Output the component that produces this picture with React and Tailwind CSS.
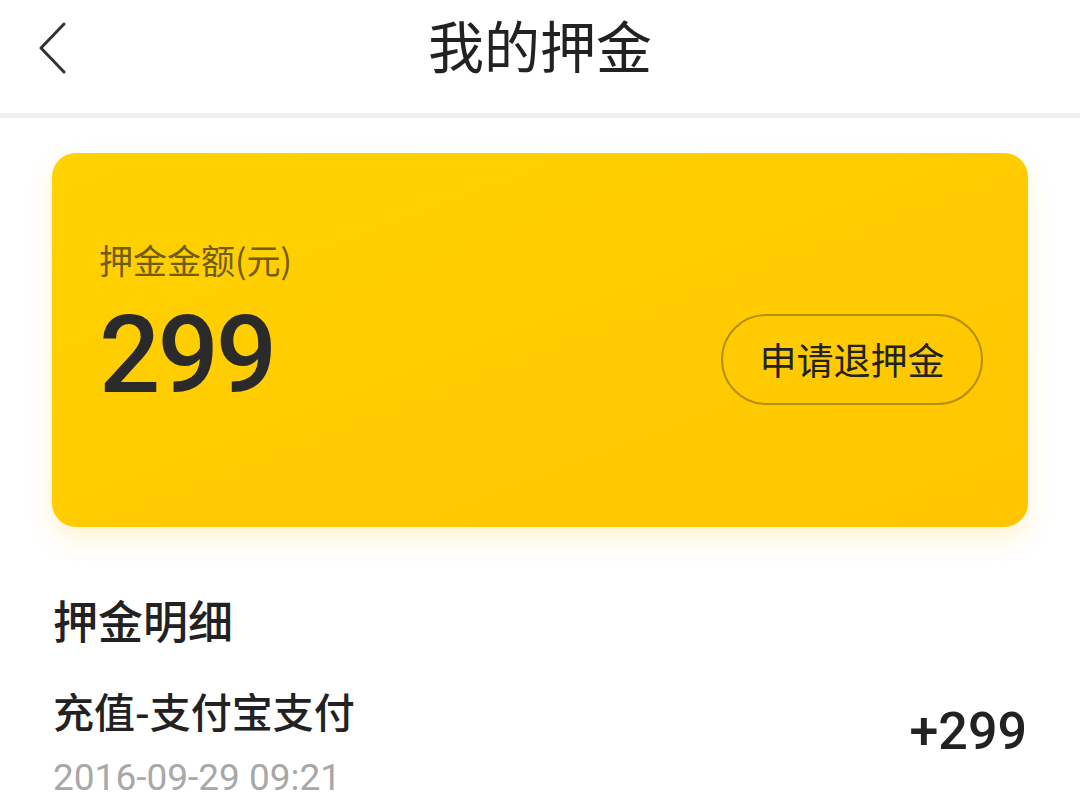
import React from 'react';

const cjk = { fontFamily: '"Noto Sans CJK SC", "Noto Sans", sans-serif' };
const num = { fontFamily: 'Roboto, "Noto Sans CJK SC", sans-serif' };

export default function App() {
  return (
    <div className="w-[1080px] h-[801px] overflow-hidden bg-white text-[#222]" style={cjk}>
      {/* Header */}
      <header className="relative h-[118px] flex items-center justify-center border-b-[5px] border-[#efefef]">
        <button className="absolute left-[32px] top-[20px] w-[40px] h-[56px] flex items-center justify-center">
          <svg width="32" height="52" viewBox="0 0 32 52" fill="none">
            <path d="M28 2 L5 26 L28 50" stroke="#333" strokeWidth="3" strokeLinecap="round" strokeLinejoin="round" />
          </svg>
        </button>
        <h1 className="-mt-[26px] text-[56px] leading-none font-normal text-[#222]">我的押金</h1>
      </header>

      {/* Deposit card */}
      <div className="mx-[52px] mt-[35px] h-[374px] rounded-[24px] bg-gradient-to-br from-[#ffd200] to-[#ffc600] shadow-[0_12px_24px_rgba(255,196,0,0.18)] flex items-start justify-between pl-[47px] pr-[45px]">
        <div className="pt-[90px]">
          <div className="text-[34px] leading-none text-[#705c14]">押金金额(元)</div>
          <div className="mt-[24px] text-[108px] leading-none font-medium tracking-[-3px] text-[#2a2a2a]" style={num}>299</div>
        </div>
        <button className="mt-[161px] w-[262px] h-[91px] rounded-full border-2 border-[#b5900c] flex items-center justify-center text-[37px] leading-none text-[#222]">
          申请退押金
        </button>
      </div>

      {/* Details */}
      <section className="px-[53px] pt-[70px]">
        <h2 className="text-[45px] leading-none font-medium text-[#222]">押金明细</h2>
        <div className="mt-[48px] flex items-center justify-between">
          <div>
            <div className="text-[41px] leading-none font-medium text-[#222]">充值-支付宝支付</div>
            <div className="mt-[28px] text-[37px] leading-none text-[#a8a8a8]" style={num}>2016-09-29 09:21</div>
          </div>
          <div className="-mt-[22px] text-[52px] leading-none font-medium text-[#222]" style={num}>+299</div>
        </div>
      </section>
    </div>
  );
}
